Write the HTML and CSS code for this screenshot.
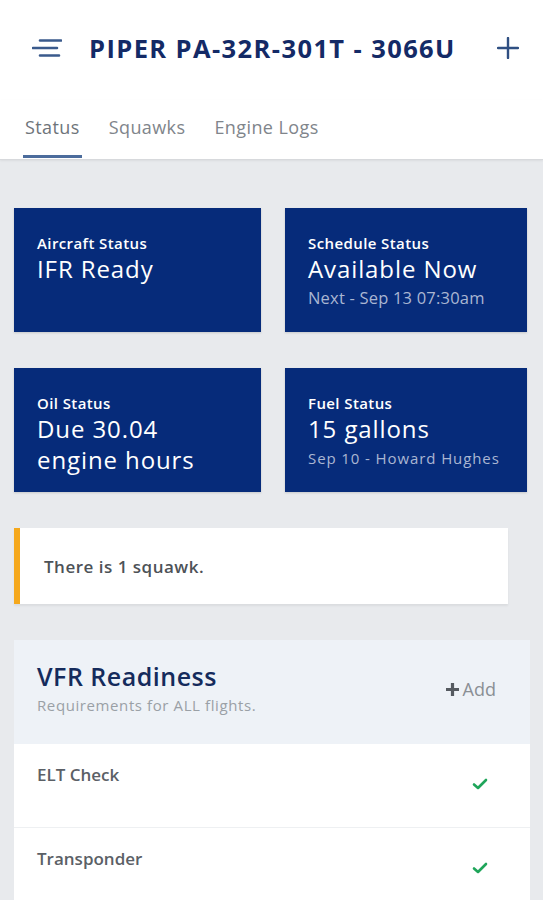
FILE: index.html
```html
<!DOCTYPE html>
<html>
<head>
<meta charset="utf-8">
<link rel="stylesheet" href="styles.css">
</head>
<body>
<header class="topbar">
  <svg class="menu-icon" width="30" height="20" viewBox="0 0 30 20">
    <path d="M8 2.5H29M1 10H25M8 17.5H27" stroke="#3a5a8c" stroke-width="2.6" stroke-linecap="round" fill="none"/>
  </svg>
  <h1 class="title">PIPER PA-32R-301T - 3066U</h1>
  <svg class="plus-icon" width="22" height="22" viewBox="0 0 22 22">
    <path d="M11 1V21M1 11H21" stroke="#2f4f82" stroke-width="2.4" stroke-linecap="round" fill="none"/>
  </svg>
</header>
<nav class="tabs">
  <span class="tab active">Status</span>
  <span class="tab">Squawks</span>
  <span class="tab">Engine Logs</span>
</nav>
<main class="content">
  <section class="status-grid">
    <div class="status-card">
      <div class="label">Aircraft Status</div>
      <div class="value">IFR Ready</div>
    </div>
    <div class="status-card">
      <div class="label">Schedule Status</div>
      <div class="value">Available Now</div>
      <div class="sub">Next - Sep 13 07:30am</div>
    </div>
    <div class="status-card">
      <div class="label">Oil Status</div>
      <div class="value">Due 30.04<br>engine hours</div>
    </div>
    <div class="status-card">
      <div class="label">Fuel Status</div>
      <div class="value">15 gallons</div>
      <div class="sub small">Sep 10 - Howard Hughes</div>
    </div>
  </section>
  <div class="alert">There is 1 squawk.</div>
  <section class="panel">
    <div class="panel-head">
      <div>
        <h2 class="panel-title">VFR Readiness</h2>
        <div class="panel-sub">Requirements for ALL flights.</div>
      </div>
      <div class="add"><svg width="15" height="15" viewBox="0 0 15 15"><path d="M7.5 1V14M1 7.5H14" stroke="#555a60" stroke-width="3.2" fill="none"/></svg>Add</div>
    </div>
    <div class="row">
      <span class="row-name">ELT Check</span>
      <svg class="check" width="16" height="12" viewBox="0 0 16 12"><path d="M2 6.5L6 10L14 2" stroke="#1fa55a" stroke-width="2.6" fill="none" stroke-linecap="round" stroke-linejoin="round"/></svg>
    </div>
    <div class="row">
      <span class="row-name">Transponder</span>
      <svg class="check" width="16" height="12" viewBox="0 0 16 12"><path d="M2 6.5L6 10L14 2" stroke="#1fa55a" stroke-width="2.6" fill="none" stroke-linecap="round" stroke-linejoin="round"/></svg>
    </div>
  </section>
</main>
</body>
</html>
```

FILE: styles.css
```css
* { box-sizing: border-box; }
html, body { margin: 0; padding: 0; }
body {
  font-family: "Open Sans", "Noto Sans", sans-serif;
  background: #e8eaed;
  width: 543px;
  height: 900px;
  overflow: hidden;
}
.topbar {
  background: #fff;
  height: 100px;
  display: flex;
  align-items: center;
  padding: 0 24px 4px 32px;
}
.menu-icon { flex: none; }
.title {
  margin: 0 0 0 27px;
  font-size: 25.5px;
  font-weight: 700;
  color: #142a66;
  letter-spacing: 1.4px;
  flex: 1;
  white-space: nowrap;
}
.plus-icon { flex: none; }
.tabs {
  background: #fff;
  height: 60px;
  display: flex;
  align-items: flex-start;
  padding: 17px 0 0 23px;
  gap: 25px;
  border-bottom: 1px solid #d7d9dc;
  box-shadow: 0 1px 2px rgba(0,0,0,0.06);
}
.tab {
  font-size: 18px;
  color: #80858b;
  padding: 0 2px 18px;
  line-height: 20px;
  letter-spacing: 0.4px;
  border-bottom: 3px solid transparent;
}
.tab.active {
  color: #6e747a;
  border-bottom-color: #4c6c9c;
}
.content {
  padding: 48px 16px 0 14px;
}
.status-grid {
  display: grid;
  grid-template-columns: 247px 242px;
  column-gap: 24px;
  row-gap: 36px;
}
.status-card {
  background: #062b7a;
  height: 124px;
  padding: 25px 6px 0 23px;
  color: #fff;
  box-shadow: 0 1px 2px rgba(0,0,0,0.15);
}
.label {
  font-size: 15px;
  font-weight: 600;
  line-height: 20px;
  letter-spacing: 0.4px;
}
.value {
  font-size: 24px;
  font-weight: 500;
  line-height: 31px;
  letter-spacing: 0.9px;
  white-space: nowrap;
}
.sub {
  font-size: 16.5px;
  color: #aab6d2;
  line-height: 28px;
  letter-spacing: 0.2px;
  white-space: nowrap;
}
.sub.small { font-size: 15px; letter-spacing: 0.9px; }
.alert {
  margin-top: 36px;
  width: 494px;
  height: 76px;
  background: #fff;
  border-left: 6px solid #f5a81c;
  display: flex;
  align-items: center;
  padding-left: 24px;
  font-size: 17px;
  font-weight: 600;
  color: #4d5257;
  letter-spacing: 0.5px;
  box-shadow: 0 2px 2px rgba(0,0,0,0.06);
}
.panel {
  margin-top: 36px;
  width: 516px;
  background: #fff;
}
.panel-head {
  background: #eef2f7;
  height: 104px;
  display: flex;
  justify-content: space-between;
  align-items: flex-start;
  padding: 20px 34px 0 23px;
}
.panel-title {
  margin: 0;
  font-size: 25px;
  font-weight: 600;
  color: #152b5c;
  line-height: 32px;
  letter-spacing: 0.5px;
}
.panel-sub {
  font-size: 15px;
  color: #9aa0a6;
  margin-top: 3px;
  letter-spacing: 0.6px;
}
.add {
  margin-top: 17px;
  display: flex;
  align-items: center;
  gap: 3px;
  font-size: 18px;
  color: #8a8f95;
}
.row {
  height: 84px;
  display: flex;
  justify-content: space-between;
  align-items: flex-start;
  padding: 19px 42px 0 23px;
  border-bottom: 1px solid #eef0f2;
}
.row-name {
  font-size: 17px;
  font-weight: 600;
  color: #5b6066;
}
.check { margin-top: 15px; }
```
